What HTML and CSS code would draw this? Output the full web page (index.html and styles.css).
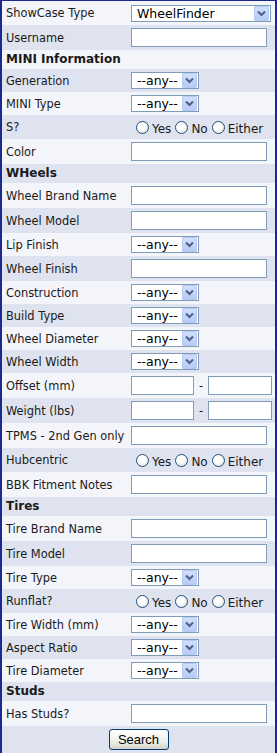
FILE: index.html
```html
<!DOCTYPE html>
<html lang="en">
<head>
    <meta charset="UTF-8">
    <meta name="viewport" content="width=device-width, initial-scale=1.0">
    <title>WheelFinder Search</title>
    <link rel="stylesheet" href="styles.css">
</head>
<body>

<form class="finder">
    <div class="row sel">
        <label class="lbl">ShowCase Type</label>
        <div class="ctl"><span class="select wide"><span class="val">WheelFinder</span><span class="arrow"><svg width="9" height="7" viewBox="0 0 9 7"><path d="M1 1.5 L4.5 5 L8 1.5" fill="none" stroke="#4d6185" stroke-width="2"/></svg></span></span></div>
    </div>
    <div class="row inp">
        <label class="lbl">Username</label>
        <div class="ctl"><input type="text" class="text"></div>
    </div>
    <div class="row hdr">MINI Information</div>
    <div class="row sel">
        <label class="lbl">Generation</label>
        <div class="ctl"><span class="select"><span class="val">--any--</span><span class="arrow"><svg width="9" height="7" viewBox="0 0 9 7"><path d="M1 1.5 L4.5 5 L8 1.5" fill="none" stroke="#4d6185" stroke-width="2"/></svg></span></span></div>
    </div>
    <div class="row sel">
        <label class="lbl">MINI Type</label>
        <div class="ctl"><span class="select"><span class="val">--any--</span><span class="arrow"><svg width="9" height="7" viewBox="0 0 9 7"><path d="M1 1.5 L4.5 5 L8 1.5" fill="none" stroke="#4d6185" stroke-width="2"/></svg></span></span></div>
    </div>
    <div class="row rad">
        <label class="lbl">S?</label>
        <div class="ctl radios">
            <span class="radio"></span><span class="opt">Yes</span>
            <span class="radio"></span><span class="opt">No</span>
            <span class="radio"></span><span class="opt">Either</span>
        </div>
    </div>
    <div class="row inp">
        <label class="lbl">Color</label>
        <div class="ctl"><input type="text" class="text"></div>
    </div>
    <div class="row hdr">WHeels</div>
    <div class="row inp">
        <label class="lbl">Wheel Brand Name</label>
        <div class="ctl"><input type="text" class="text"></div>
    </div>
    <div class="row inp">
        <label class="lbl">Wheel Model</label>
        <div class="ctl"><input type="text" class="text"></div>
    </div>
    <div class="row sel">
        <label class="lbl">Lip Finish</label>
        <div class="ctl"><span class="select"><span class="val">--any--</span><span class="arrow"><svg width="9" height="7" viewBox="0 0 9 7"><path d="M1 1.5 L4.5 5 L8 1.5" fill="none" stroke="#4d6185" stroke-width="2"/></svg></span></span></div>
    </div>
    <div class="row inp">
        <label class="lbl">Wheel Finish</label>
        <div class="ctl"><input type="text" class="text"></div>
    </div>
    <div class="row sel">
        <label class="lbl">Construction</label>
        <div class="ctl"><span class="select"><span class="val">--any--</span><span class="arrow"><svg width="9" height="7" viewBox="0 0 9 7"><path d="M1 1.5 L4.5 5 L8 1.5" fill="none" stroke="#4d6185" stroke-width="2"/></svg></span></span></div>
    </div>
    <div class="row sel">
        <label class="lbl">Build Type</label>
        <div class="ctl"><span class="select"><span class="val">--any--</span><span class="arrow"><svg width="9" height="7" viewBox="0 0 9 7"><path d="M1 1.5 L4.5 5 L8 1.5" fill="none" stroke="#4d6185" stroke-width="2"/></svg></span></span></div>
    </div>
    <div class="row sel">
        <label class="lbl">Wheel Diameter</label>
        <div class="ctl"><span class="select"><span class="val">--any--</span><span class="arrow"><svg width="9" height="7" viewBox="0 0 9 7"><path d="M1 1.5 L4.5 5 L8 1.5" fill="none" stroke="#4d6185" stroke-width="2"/></svg></span></span></div>
    </div>
    <div class="row sel">
        <label class="lbl">Wheel Width</label>
        <div class="ctl"><span class="select"><span class="val">--any--</span><span class="arrow"><svg width="9" height="7" viewBox="0 0 9 7"><path d="M1 1.5 L4.5 5 L8 1.5" fill="none" stroke="#4d6185" stroke-width="2"/></svg></span></span></div>
    </div>
    <div class="row inp">
        <label class="lbl">Offset (mm)</label>
        <div class="ctl range"><input type="text" class="text lo"><span class="dash">-</span><input type="text" class="text hi"></div>
    </div>
    <div class="row inp">
        <label class="lbl">Weight (lbs)</label>
        <div class="ctl range"><input type="text" class="text lo"><span class="dash">-</span><input type="text" class="text hi"></div>
    </div>
    <div class="row inp">
        <label class="lbl">TPMS - 2nd Gen only</label>
        <div class="ctl"><input type="text" class="text"></div>
    </div>
    <div class="row rad">
        <label class="lbl">Hubcentric</label>
        <div class="ctl radios">
            <span class="radio"></span><span class="opt">Yes</span>
            <span class="radio"></span><span class="opt">No</span>
            <span class="radio"></span><span class="opt">Either</span>
        </div>
    </div>
    <div class="row inp">
        <label class="lbl">BBK Fitment Notes</label>
        <div class="ctl"><input type="text" class="text"></div>
    </div>
    <div class="row hdr">Tires</div>
    <div class="row inp">
        <label class="lbl">Tire Brand Name</label>
        <div class="ctl"><input type="text" class="text"></div>
    </div>
    <div class="row inp">
        <label class="lbl">Tire Model</label>
        <div class="ctl"><input type="text" class="text"></div>
    </div>
    <div class="row sel">
        <label class="lbl">Tire Type</label>
        <div class="ctl"><span class="select"><span class="val">--any--</span><span class="arrow"><svg width="9" height="7" viewBox="0 0 9 7"><path d="M1 1.5 L4.5 5 L8 1.5" fill="none" stroke="#4d6185" stroke-width="2"/></svg></span></span></div>
    </div>
    <div class="row rad">
        <label class="lbl">Runflat?</label>
        <div class="ctl radios">
            <span class="radio"></span><span class="opt">Yes</span>
            <span class="radio"></span><span class="opt">No</span>
            <span class="radio"></span><span class="opt">Either</span>
        </div>
    </div>
    <div class="row sel">
        <label class="lbl">Tire Width (mm)</label>
        <div class="ctl"><span class="select"><span class="val">--any--</span><span class="arrow"><svg width="9" height="7" viewBox="0 0 9 7"><path d="M1 1.5 L4.5 5 L8 1.5" fill="none" stroke="#4d6185" stroke-width="2"/></svg></span></span></div>
    </div>
    <div class="row sel">
        <label class="lbl">Aspect Ratio</label>
        <div class="ctl"><span class="select"><span class="val">--any--</span><span class="arrow"><svg width="9" height="7" viewBox="0 0 9 7"><path d="M1 1.5 L4.5 5 L8 1.5" fill="none" stroke="#4d6185" stroke-width="2"/></svg></span></span></div>
    </div>
    <div class="row sel">
        <label class="lbl">Tire Diameter</label>
        <div class="ctl"><span class="select"><span class="val">--any--</span><span class="arrow"><svg width="9" height="7" viewBox="0 0 9 7"><path d="M1 1.5 L4.5 5 L8 1.5" fill="none" stroke="#4d6185" stroke-width="2"/></svg></span></span></div>
    </div>
    <div class="row hdr">Studs</div>
    <div class="row inp">
        <label class="lbl">Has Studs?</label>
        <div class="ctl"><input type="text" class="text"></div>
    </div>
    <div class="row submit">
        <button type="button" class="search">Search</button>
    </div>
</form>

</body>
</html>
```

FILE: styles.css
```css
body {
    margin: 0;
    font-family: 'DejaVu Sans', Verdana, sans-serif;
    font-size: 11.4px;
    color: #1a1a1a;
}
.finder {
    width: 277px;
    box-sizing: border-box;
    border: 2px solid #1b2a8f;
    border-top-width: 1px;
    border-bottom: 0;
    margin: 0;
}
.row {
    display: grid;
    grid-template-columns: 126px 1fr;
    align-items: center;
    background-color: #f4f4fb;
}
.row:nth-child(even) {
    background-color: #dfe3ef;
}
.row.inp { height: 25px; }
.row.sel { height: 23px; }
.row.rad { height: 24px; }
.row.hdr {
    display: block;
    height: 19px;
    line-height: 19px;
    padding-left: 4px;
    font-size: 12px;
    font-weight: bold;
}
.row.submit {
    display: flex;
    justify-content: center;
    height: 27px;
}
.finder .row:first-child { height: 24px; }
.lbl {
    padding-left: 4px;
    white-space: nowrap;
}
.ctl {
    padding-left: 3px;
    display: flex;
    align-items: center;
}
.text {
    width: 136px;
    height: 19px;
    box-sizing: border-box;
    margin: 0;
    border: 1px solid #7f9db9;
    background: white;
    padding: 0 3px;
    font: inherit;
}
.range .lo { width: 63px; }
.range .hi { width: 64px; }
.dash {
    width: 14px;
    text-align: center;
}
.select {
    display: flex;
    align-items: center;
    width: 68px;
    height: 17px;
    box-sizing: border-box;
    border: 1px solid #7f9db9;
    background: white;
    padding: 1px;
    font-size: 12.5px;
}
.select.wide { width: 140px; }
.select .val {
    flex: 1;
    padding-left: 4px;
    line-height: 15px;
    color: #000;
}
.arrow {
    width: 15px;
    height: 15px;
    box-sizing: border-box;
    border: 1px solid #b6c9f3;
    border-radius: 1px;
    background: linear-gradient(#d2defb, #b8cbf6);
    display: flex;
    align-items: center;
    justify-content: center;
}
.ctl.radios {
    padding-left: 8px;
    font-size: 12px;
}
.radio {
    width: 13px;
    height: 13px;
    box-sizing: border-box;
    border: 1px solid #1c5180;
    border-radius: 50%;
    background: radial-gradient(circle at 35% 35%, #ffffff 40%, #d6d6ce);
}
.opt {
    margin: 3px 4px 0 3px;
}
.search {
    width: 60px;
    height: 21px;
    padding: 0;
    font-family: 'Liberation Sans', Arial, sans-serif;
    font-size: 13px;
    color: #000;
    border: 1px solid #003c74;
    border-radius: 3px;
    background: linear-gradient(#ffffff, #f0f0ea 60%, #d6d0c5);
}
```
